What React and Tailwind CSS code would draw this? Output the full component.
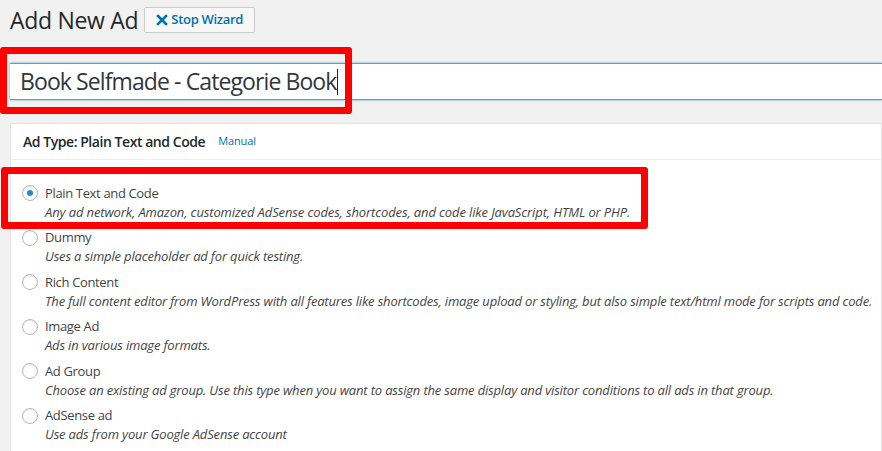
import React from "react";

const items = [
  { label: "Plain Text and Code", desc: "Any ad network, Amazon, customized AdSense codes, shortcodes, and code like JavaScript, HTML or PHP.", checked: true },
  { label: "Dummy", desc: "Uses a simple placeholder ad for quick testing." },
  { label: "Rich Content", desc: "The full content editor from WordPress with all features like shortcodes, image upload or styling, but also simple text/html mode for scripts and code." },
  { label: "Image Ad", desc: "Ads in various image formats." },
  { label: "Ad Group", desc: "Choose an existing ad group. Use this type when you want to assign the same display and visitor conditions to all ads in that group." },
  { label: "AdSense ad", desc: "Use ads from your Google AdSense account" },
];

export default function App() {
  return (
    <div className="relative w-[882px] h-[451px] overflow-hidden bg-[#f1f1f1] text-[#444] font-['Open_Sans',sans-serif]">
      <div className="pl-[10px] pt-[4px] flex items-center gap-[6px] h-[36px]">
        <h1 className="text-[23px] leading-[29px] text-[#23282d] font-normal tracking-[-0.3px]">Add New Ad</h1>
        <button className="flex items-center gap-[3px] h-[26px] px-[11px] border border-[#ccc] rounded-[2px] bg-[#f7f7f7] text-[#0073aa] text-[13px] font-semibold tracking-[-0.3px]">
          <svg width="12" height="12" viewBox="0 0 12 12"><path d="M2 2 L10 10 M10 2 L2 10" stroke="#0073aa" strokeWidth="2.6" strokeLinecap="square" /></svg>
          Stop Wizard
        </button>
      </div>

      <div className="pl-[10px] pt-[27px]">
        <div className="h-[37px] bg-white border-y border-[#5b9dd9] shadow-[0_0_2px_rgba(30,140,190,0.8)] flex items-center pl-[10px]">
          <span className="text-[23px] leading-none text-[#32373c] tracking-[-0.9px]">Book Selfmade - Categorie Book</span>
          <span className="w-px h-[26px] bg-[#222] ml-[1px]" />
        </div>
      </div>

      <div className="ml-[10px] mt-[23px] bg-white border border-[#e5e5e5] h-[400px]">
        <div className="h-[36px] border-b border-[#eee] flex items-center pl-[12px] gap-[13px]">
          <span className="text-[14px] font-semibold text-[#23282d] tracking-[-0.45px]">Ad Type: Plain Text and Code</span>
          <span className="text-[11px] text-[#0073aa] tracking-[-0.1px]">Manual</span>
        </div>
        <ul className="pl-[11px] pt-[23.5px]">
          {items.map((it) => (
            <li key={it.label} className="flex mb-[6.5px]">
              <span className="mt-[1.5px] w-[16px] h-[16px] rounded-full border border-[#b4b9be] bg-white shadow-[inset_0_1px_2px_rgba(0,0,0,0.1)] flex items-center justify-center shrink-0">
                {it.checked && <span className="w-[6px] h-[6px] rounded-full bg-[#1e8cbe]" />}
              </span>
              <div className="ml-[7px] text-[13px] leading-[19px] tracking-[-0.35px]">
                <div className="text-[#444]">{it.label}</div>
                <div className={"italic text-[#444] " + (it.checked ? "tracking-[-0.12px]" : "tracking-[-0.17px]")}>{it.desc}</div>
              </div>
            </li>
          ))}
        </ul>
      </div>

      <div className="absolute left-0 top-[47px] w-[352px] h-[67px] border-[7px] border-[#ff0000] rounded-[3px]" />
      <div className="absolute left-[1px] top-[167px] w-[647px] h-[62px] border-[7px] border-[#ff0000] rounded-[3px]" />
    </div>
  );
}
